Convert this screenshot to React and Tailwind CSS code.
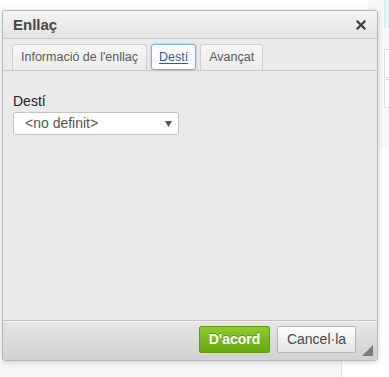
export default function App() {
  return (
    <div className="relative w-[389px] h-[377px] bg-white overflow-hidden font-['Liberation_Sans',Arial,sans-serif]">
      {/* page behind the dialog */}
      <div className="absolute right-0 top-0 w-[21px] h-[148px] bg-[#f8f8f8] flex flex-col items-end">
        <div className="w-[5px] h-[28px] bg-[#e6f4fc] border-l border-[#d6eaf6]" />
        <div className="w-[5px] h-[29px] mt-[21px] bg-white border border-r-0 border-[#dedede]" />
        <div className="w-[5px] h-[29px] mt-[1px] bg-white border border-r-0 border-[#dedede]" />
      </div>
      <div className="absolute left-0 bottom-0 w-[389px] h-[16px] flex">
        <div className="w-[342px] bg-[#f6f6f6] border-r border-[#e2e2e2]" />
        <div className="flex-1 bg-white" />
      </div>

      {/* dialog */}
      <div className="absolute left-[2px] top-[10px] w-[376px] h-[351px] flex flex-col border border-[#b6b6b6] rounded-[3px] bg-[#eaeaea] shadow-[0_1px_6px_rgba(0,0,0,0.18)] overflow-hidden">
        {/* title */}
        <div className="h-[28px] shrink-0 flex items-center justify-between pl-[10px] pr-[10px] bg-gradient-to-b from-[#f4f4f4] to-[#e3e3e3] border-b border-[#c9c9c9]">
          <span className="text-[15px] font-bold text-[#474747] leading-none">Enllaç</span>
          <svg width="10" height="10" viewBox="0 0 10 10" className="mr-[1px]">
            <path d="M1.5 1.5 L8.5 8.5 M8.5 1.5 L1.5 8.5" stroke="#3d3d3d" strokeWidth="2.2" strokeLinecap="square" />
          </svg>
        </div>

        {/* tabs */}
        <div className="h-[32px] shrink-0 flex items-end gap-[4px] pl-[9px] border-b border-[#c9c9c9] bg-[#eaeaea]">
          <div className="h-[26px] px-[8px] flex items-center text-[12.5px] text-[#595959] bg-gradient-to-b from-[#f7f7f7] to-[#ebebeb] border border-b-0 border-[#cfcfcf] rounded-t-[3px]">
            Informació de l'enllaç
          </div>
          <div className="h-[26px] px-[7px] flex items-center text-[12.5px] text-[#2b5d9a] underline underline-offset-2 bg-white border border-[#7fb0e8] rounded-[3px] shadow-[0_0_2px_rgba(76,145,220,0.6)]">
            Destí
          </div>
          <div className="h-[26px] px-[8px] flex items-center text-[12.5px] text-[#595959] bg-gradient-to-b from-[#f7f7f7] to-[#ebebeb] border border-b-0 border-[#cfcfcf] rounded-t-[3px]">
            Avançat
          </div>
        </div>

        {/* body */}
        <div className="flex-1 flex flex-col pt-[22px] pl-[10px]">
          <label className="text-[14px] leading-[17px] text-[#222]">Destí</label>
          <div className="mt-[2px] w-[166px] h-[23px] flex items-center justify-between pl-[11px] pr-[6px] bg-white border border-[#c4c4c4] rounded-[2px]">
            <span className="text-[14px] text-[#555]">&lt;no definit&gt;</span>
            <svg width="7" height="6" viewBox="0 0 7 6">
              <path d="M0 0 H7 L3.5 6 Z" fill="#555" />
            </svg>
          </div>
        </div>

        {/* footer */}
        <div className="relative h-[40px] shrink-0 flex items-start justify-end gap-[7px] pt-[5px] pr-[21px] bg-gradient-to-b from-[#e6e6e6] to-[#d2d2d2] border-t border-[#c2c2c2] shadow-[inset_0_1px_0_#f4f4f4]">
          <button className="w-[71px] h-[27px] flex items-center justify-center text-[14px] font-bold text-white [text-shadow:0_-1px_0_#5a8f12] bg-gradient-to-b from-[#8fcc2f] to-[#66a70c] border border-[#5e9c0c] rounded-[2px]">
            D'acord
          </button>
          <button className="w-[79px] h-[27px] flex items-center justify-center text-[14px] text-[#474747] bg-gradient-to-b from-[#ffffff] to-[#e4e4e4] border border-[#b6b6b6] rounded-[2px]">
            Cancel·la
          </button>
          <svg width="11" height="11" viewBox="0 0 11 11" className="absolute right-[4px] bottom-[4px]">
            <path d="M11 0 V11 H0 Z" fill="#7b7b7b" />
          </svg>
        </div>
      </div>
    </div>
  );
}
